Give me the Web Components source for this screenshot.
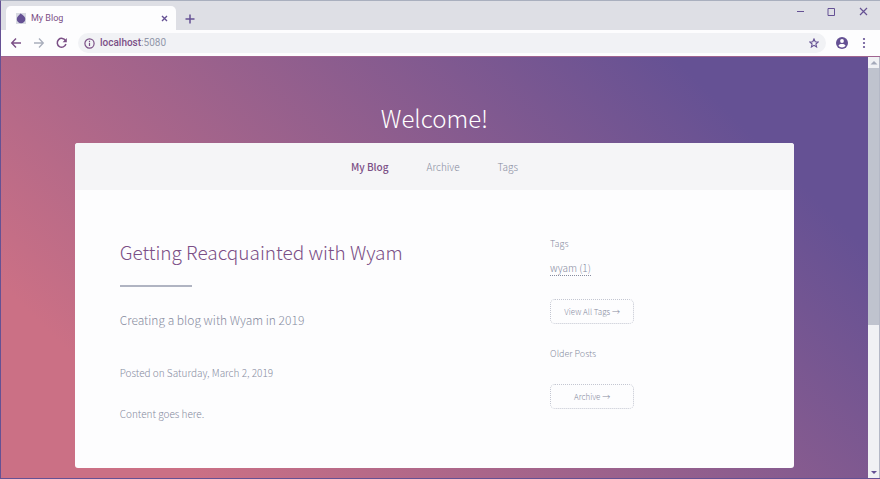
<!DOCTYPE html>
<html lang="en">
<head>
<meta charset="utf-8">
<title>My Blog</title>
<style>
  html, body { margin: 0; height: 100%; }
  body {
    --purple: #655194;
    --plum: #7b4f86;
    --muted: #878c9f;
    --ui: Roboto, "Open Sans", sans-serif;
    --text: "Noto Sans CJK SC", "Noto Sans", sans-serif;
    font-family: var(--text);
    font-weight: 300;
    overflow: hidden;
  }
</style>
</head>
<body>
<browser-window>
  <tab-strip slot="tabs">My Blog</tab-strip>
  <address-bar slot="toolbar" host="localhost" port=":5080"></address-bar>
  <blog-page>
    <span slot="title">Welcome!</span>
    <site-nav slot="nav">
      <a href="#home" class="active">My Blog</a>
      <a href="#archive">Archive</a>
      <a href="#tags">Tags</a>
    </site-nav>
    <blog-post slot="post">
      <span slot="heading">Getting Reacquainted with Wyam</span>
      <span slot="lead">Creating a blog with Wyam in 2019</span>
      <span slot="date">Posted on Saturday, March 2, 2019</span>
      <span slot="body">Content goes here.</span>
    </blog-post>
    <blog-sidebar slot="side"></blog-sidebar>
  </blog-page>
  <scroll-track slot="scroll"></scroll-track>
</browser-window>

<script>
const define = (name, html, setup) => {
  const template = document.createElement('template');
  template.innerHTML = html;
  customElements.define(name, class extends HTMLElement {
    constructor() {
      super();
      this.attachShadow({ mode: 'open' }).append(template.content.cloneNode(true));
    }
    connectedCallback() { if (setup) setup(this, this.shadowRoot); }
  });
};

define('browser-window', `
<style>
  :host { display: flex; flex-direction: column; height: 100vh; box-sizing: border-box;
          border: 1px solid var(--purple); border-top-color: #a9afbe; border-right: 0; background: #fdfdfe; }
  .view { flex: 1; display: flex; min-height: 0; border-top: 1px solid #a06490; }
  .page { flex: 1; min-width: 0; display: flex; }
</style>
<slot name="tabs"></slot>
<slot name="toolbar"></slot>
<div class="view"><div class="page"><slot></slot></div><slot name="scroll"></slot></div>
`);

define('tab-strip', `
<style>
  :host { display: flex; height: 29px; background: #dedfe5; font: 400 9px/12px var(--ui); color: var(--plum); }
  .tab { display: flex; align-items: center; width: 170px; box-sizing: border-box; height: 24px; margin: 5px 0 0 5px;
         padding: 0 8px 0 10px; background: #fdfdfe; border-radius: 5px 5px 0 0; gap: 5px; }
  .name { flex: 1; }
  button { border: 0; background: none; padding: 0; display: flex; color: var(--purple); }
  svg { display: block; fill: none; stroke: currentColor; }
  .new { align-self: center; margin: 6px 0 0 9px; }
  .win { margin-left: auto; display: flex; gap: 21px; padding: 5px 11px 0 0; align-items: flex-start; }
</style>
<div class="tab">
  <svg width="10" height="11" viewBox="0 0 10 11" style="color:var(--purple)"><path d="M0 0h10v11H0z" fill="#d8dae2" stroke="none"/><path d="M4.500.5C5.500 1.200 9.300 3 9.300 6a4.200 4.200 0 0 1-8.500 0c0-2 2-3.500 3.700-5.500z" fill="currentColor" stroke="none"/></svg>
  <span class="name"><slot></slot></span>
  <button aria-label="Close tab"><svg width="7" height="7" viewBox="0 0 7 7" stroke-width="1.400"><path d="M1 1l5 5M6 1L1 6"/></svg></button>
</div>
<button class="new" aria-label="New tab"><svg width="10" height="10" viewBox="0 0 10 10" stroke-width="1.500"><path d="M5 .5v9M.5 5h9"/></svg></button>
<div class="win">
  <button aria-label="Minimize"><svg width="10" height="10" viewBox="0 0 10 10"><path d="M2 5.500h7"/></svg></button>
  <button aria-label="Maximize"><svg width="10" height="10" viewBox="0 0 10 10"><path d="M2 2.500h6.500v7H2z"/></svg></button>
  <button aria-label="Close"><svg width="12" height="10" viewBox="0 0 12 10" stroke-width="1.200"><path d="M3 2l7 7M10 2L3 9"/></svg></button>
</div>
`);

define('address-bar', `
<style>
  :host { display: flex; align-items: center; height: 26px; padding: 0 11px 0 9px; background: #fdfdfe; color: var(--plum); }
  button { border: 0; background: none; padding: 0; display: flex; color: inherit; margin-right: 11px; }
  svg { display: block; fill: none; stroke: currentColor; flex: none; }
  label { flex: 1; display: flex; align-items: center; height: 20px; margin-right: 10px; padding: 0 7px 0 6px;
          background: #f1f2f5; border-radius: 10px; gap: 5px; }
  .url { flex: 1; min-width: 0; display: flex; font: 400 10px/14px var(--ui); }
  .host { font-weight: 500; }
  .port { color: #9298aa; }
  .right { margin: 0; color: var(--purple); }
  .menu { margin-left: 11px; }
</style>
<button aria-label="Back"><svg width="12" height="12" viewBox="0 0 12 12" stroke-width="1.400"><path d="M11 6H2M6 1.500L1.700 6 6 10.500"/></svg></button>
<button aria-label="Forward" style="color:#a9aebc"><svg width="12" height="12" viewBox="0 0 12 12" stroke-width="1.300"><path d="M1 6h9M6 1.500L10.300 6 6 10.500"/></svg></button>
<button aria-label="Reload" style="margin-right:10px"><svg width="12" height="12" viewBox="0 0 12 12" stroke-width="1.500"><path d="M9.500 3.600A4.400 4.400 0 1 0 9.900 7"/><path d="M10.800 1v4.200H6.600z" fill="currentColor" stroke="none"/></svg></button>
<label>
  <svg width="11" height="11" viewBox="0 0 11 11" stroke-width="1.200"><circle cx="5.500" cy="5.500" r="4.600"/><path d="M5.500 4.800v3.200M5.500 2.700v1.200"/></svg>
  <span class="url"><span class="host"></span><span class="port"></span></span>
  <svg width="10" height="10" viewBox="0 0 10 10" stroke-width="1.100" style="color:var(--purple)"><path d="M5 .9l1.200 2.800 3 .3-2.300 2 .7 3L5 7.400 2.400 9l.7-3L.8 4l3-.3z"/></svg>
</label>
<button class="right" aria-label="Profile"><svg width="12" height="12" viewBox="0 0 12 12"><circle cx="6" cy="6" r="6" fill="currentColor" stroke="none"/><circle cx="6" cy="4" r="1.900" fill="#fff" stroke="none"/><path d="M2.400 8.800C3 7.400 4.600 7 6 7s3 .4 3.600 1.800A4.500 4.500 0 0 1 6 10.500 4.500 4.500 0 0 1 2.400 8.800z" fill="#fff" stroke="none"/></svg></button>
<button class="right menu" aria-label="Menu"><svg width="10" height="12" viewBox="0 0 10 12"><g fill="currentColor" stroke="none"><circle cx="5" cy="2" r="1.100"/><circle cx="5" cy="6" r="1.100"/><circle cx="5" cy="10" r="1.100"/></g></svg></button>
`, (el, root) => {
  root.querySelector('.host').textContent = el.getAttribute('host');
  root.querySelector('.port').textContent = el.getAttribute('port');
});

define('scroll-track', `
<style>
  :host { display: flex; flex-direction: column; width: 12px; box-sizing: border-box; background: #f0f1f4; border-right: 1px solid #b4b8c6; }
  svg { display: block; flex: none; }
  .thumb { height: 61%; background: #bfc3ce; }
  .rest { flex: 1; }
</style>
<svg width="11" height="11" viewBox="0 0 11 11"><path d="M2.500 7.500h7L6 4z" fill="#a4a9b9"/></svg>
<div class="thumb"></div><div class="rest"></div>
<svg width="11" height="11" viewBox="0 0 11 11"><path d="M3 4h6L6 7z" fill="#655194"/></svg>
`);

define('blog-page', `
<style>
  :host { flex: 1; display: block; background: linear-gradient(45deg, #cb7085 15%, #655194 85%); }
  h1 { margin: 0; padding: 49px 0 13px; text-align: center; color: #fff; font: 300 24px/24px var(--text); }
  .card { width: 83%; margin: 0 auto; background: #fdfdfe; border-radius: 3px; overflow: hidden; }
  main { display: grid; grid-template-columns: 2fr 1fr; gap: 32px; padding: 42px 45px; }
</style>
<h1><slot name="title"></slot></h1>
<div class="card">
  <slot name="nav"></slot>
  <main><slot name="post"></slot><slot name="side"></slot></main>
</div>
`);

define('site-nav', `
<style>
  :host { display: flex; justify-content: center; gap: 38px; height: 47px; align-items: center; background: #f5f5f7; }
  ::slotted(a) { font: 300 10px/20px var(--text); color: var(--muted); text-decoration: none; }
  ::slotted(a.active) { font-weight: 500; color: var(--plum); }
</style>
<slot></slot>
`);

define('blog-post', `
<style>
  :host { display: block; color: var(--muted); }
  h2 { margin: 0; font: 300 19px/40px var(--text); color: var(--plum); }
  hr { width: 72px; height: 2px; border: 0; margin: 13px 0 22px; background: #b0b4c2; }
  h3 { margin: 0 0 30px; font: 300 12px/22px var(--text); }
  p { margin: 0 0 17px; font: 300 10px/24px var(--text); }
  p:last-child { margin: 0; }
</style>
<h2><slot name="heading"></slot></h2>
<hr>
<h3><slot name="lead"></slot></h3>
<p><slot name="date"></slot></p>
<p><slot name="body"></slot></p>
`);

define('blog-sidebar', `
<style>
  :host { display: block; color: var(--muted); }
  h4 { margin: 2px 0 0; font: 300 9px/20px var(--text); }
  p { margin: 2px 0 19px; font: 300 10px/24px var(--text); }
  a { color: inherit; text-decoration: none; }
  p a { display: inline-block; line-height: 14px; border-bottom: 1px dotted var(--muted); }
  .button { display: block; width: 84px; height: 25px; box-sizing: border-box; border: 1px dotted #c3c6d1; border-radius: 5px;
            text-align: center; font: 300 8px/23px var(--text); }
  .older { margin: 20px 0; }
</style>
<h4>Tags</h4>
<p><a href="#wyam">wyam (1)</a></p>
<a class="button" href="#tags">View All Tags →</a>
<h4 class="older">Older Posts</h4>
<a class="button" href="#archive">Archive →</a>
`);
</script>
</body>
</html>
